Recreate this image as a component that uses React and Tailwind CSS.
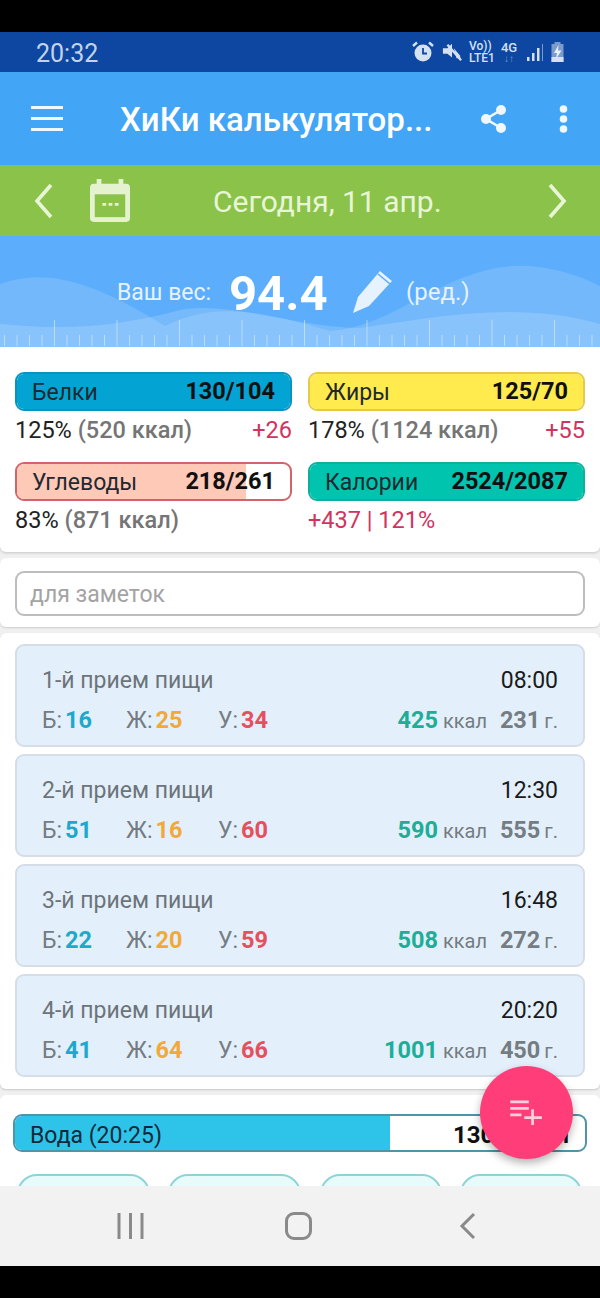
import React from 'react';

const meals = [
  { name: '1-й прием пищи', time: '08:00', b: 16, j: 25, u: 34, kcal: 425, g: 231 },
  { name: '2-й прием пищи', time: '12:30', b: 51, j: 16, u: 60, kcal: 590, g: 555 },
  { name: '3-й прием пищи', time: '16:48', b: 22, j: 20, u: 59, kcal: 508, g: 272 },
  { name: '4-й прием пищи', time: '20:20', b: 41, j: 64, u: 66, kcal: 1001, g: 450 },
];

const StatusBar = () => (
  <div className="h-10 bg-[#0d47a1] flex items-center pl-[36px] pr-[35px] justify-between">
    <span className="text-[25px] leading-none mt-[2px] text-[#c3d3ea]">20:32</span>
    <div className="flex items-center text-[#d5e0f0]">
      {/* alarm */}
      <svg width="22" height="24" viewBox="0 0 22 24" className="mr-[8px]">
        <circle cx="11" cy="13" r="8.500" fill="#d5e0f0" />
        <path d="M11 8v5.500h4" stroke="#0d47a1" strokeWidth="1.800" fill="none" />
        <path d="M1 6l4-3.500M21 6l-4-3.500" stroke="#d5e0f0" strokeWidth="2.400" />
      </svg>
      {/* muted */}
      <svg width="20" height="22" viewBox="0 0 22 22" className="mr-[7px]">
        <path d="M1 7h5l5-5v15l-5-4H1z" fill="#d5e0f0" />
        <path d="M6 3l15 17" stroke="#d5e0f0" strokeWidth="2.600" />
        <path d="M13 7l7 8v3h-4z" fill="#d5e0f0" />
      </svg>
      <div className="flex flex-col text-[12px] leading-[12px] font-medium w-[27px] mr-[5px]">
        <span>Vo))</span>
        <span>LTE1</span>
      </div>
      <div className="flex flex-col items-center w-[16px] text-[13px] leading-[13px] font-medium mr-[9px]">
        <span>4G</span>
        <span className="text-[10px] leading-[9px] text-[#7c9bcb]">↓↑</span>
      </div>
      <svg width="18" height="22" viewBox="0 0 18 22" className="mr-[6px]">
        <path d="M1 16h2.500v4H1zM6 12h2.500v8H6zM11 7h2.500v13H11z" fill="#d5e0f0" />
        <path d="M16 3h1v17h-1z" fill="#7c9bcb" />
      </svg>
      <svg width="15" height="22" viewBox="0 0 14 22">
        <path d="M4 1h6v2h3v18H1V3h3z" fill="#7c9bcb" />
        <path d="M1 16h12v5H1z" fill="#d5e0f0" />
        <path d="M8 4L3.500 12h3L5.500 18 11 9.500H7.500z" fill="#eaf0f8" />
      </svg>
    </div>
  </div>
);

const AppBar = () => (
  <div className="h-[93px] bg-[#42a5f5] flex items-center text-white">
    <svg width="32" height="25" viewBox="0 0 32 25" className="ml-[31px] shrink-0">
      <path d="M0 1.500h32M0 12.500h32M0 23.500h32" stroke="#f0f7fe" strokeWidth="3" />
    </svg>
    <span className="ml-[57px] mt-[2px] text-[33px] font-medium w-[330px] shrink-0 whitespace-nowrap">ХиКи калькулятор...</span>
    <svg width="27" height="30" viewBox="0 0 27 30" className="ml-[30px] shrink-0">
      <path d="M21 6L6 15l15 9" stroke="#f0f7fe" strokeWidth="2.600" fill="none" />
      <circle cx="21" cy="6" r="5" fill="#f0f7fe" />
      <circle cx="6" cy="15" r="5" fill="#f0f7fe" />
      <circle cx="21" cy="24" r="5" fill="#f0f7fe" />
    </svg>
    <svg width="9" height="28" viewBox="0 0 9 28" className="ml-[52px] shrink-0">
      <circle cx="4.500" cy="4" r="3.800" fill="#f0f7fe" />
      <circle cx="4.500" cy="14" r="3.800" fill="#f0f7fe" />
      <circle cx="4.500" cy="24" r="3.800" fill="#f0f7fe" />
    </svg>
  </div>
);

const DateBar = () => (
  <div className="h-[71px] bg-[#8bc34a] flex items-center text-[#e8f5d6]">
    <svg width="19" height="36" viewBox="0 0 19 36" className="ml-[34px] shrink-0">
      <path d="M17 2L3 18l14 16" stroke="#e8f5d6" strokeWidth="3.600" fill="none" />
    </svg>
    <svg width="40" height="45" viewBox="0 0 42 47" className="ml-[37px] shrink-0">
      <path d="M7 1h5v5h18V1h5v5h3a4 4 0 0 1 4 4v32a4 4 0 0 1-4 4H4a4 4 0 0 1-4-4V10a4 4 0 0 1 4-4h3z" fill="#e4f2d0" />
      <rect x="5" y="17" width="32" height="24" fill="#8bc34a" />
      <path d="M13 26h4v3h-4zM19.500 26h4v3h-4zM26 26h4v3h-4z" fill="#e4f2d0" />
    </svg>
    <span className="ml-[83px] mt-[2px] text-[30px] whitespace-nowrap w-[335px] shrink-0">Сегодня, 11 апр.</span>
    <svg width="19" height="36" viewBox="0 0 19 36" className="shrink-0">
      <path d="M2 2l14 16L2 34" stroke="#e8f5d6" strokeWidth="3.600" fill="none" />
    </svg>
  </div>
);

const Ruler = () => {
  const ticks = [];
  for (let i = 0; i < 48; i++) {
    const major = i % 5 === 4;
    ticks.push(
      <rect key={i} x={4 + i * 12.5} y={major ? 84 : 99} width="1" height={major ? 26 : 11} fill="#dcecfd" opacity=".6" />
    );
  }
  return <g>{ticks}</g>;
};

const WeightBar = () => (
  <div className="relative h-[111px] bg-[#5cadfb] overflow-hidden">
    <svg className="absolute inset-0" width="600" height="111" viewBox="0 0 600 111">
      <path d="M0 48C50 30 100 50 165 90C215 65 260 75 330 95C400 90 450 25 530 30C560 33 580 40 600 50V111H0z" fill="#ffffff" opacity=".14" />
      <path d="M0 88C70 95 120 90 180 74C230 65 290 90 360 92C440 80 520 65 600 88V111H0z" fill="#ffffff" opacity=".16" />
      <Ruler />
    </svg>
    <div className="relative flex items-center h-full pl-[117px] pt-[3px] text-[#e6f2fe]">
      <span className="text-[23px] mt-[1px] w-[112px] shrink-0">Ваш вес:</span>
      <span className="text-[49px] font-bold text-white leading-none w-[123px] shrink-0">94.4</span>
      <svg width="42" height="46" viewBox="0 0 42 46" className="mt-[-4px] shrink-0">
        <path d="M1 45l5-16L28 3l12 10-23 25z" fill="#e6f2fe" />
        <path d="M26 6l12 10M29.500 3l11 9" stroke="#5cadfb" strokeWidth="1.600" />
      </svg>
      <span className="text-[24px] ml-[12px] mt-[-3px]">(ред.)</span>
    </div>
  </div>
);

const Macro = ({ label, value, fill, border, width, lines }) => (
  <div className="w-[277px]">
    <div className={`relative h-[39px] rounded-[9px] border-2 bg-white overflow-hidden ${border}`}>
      <div className={`absolute inset-y-0 left-0 ${fill} ${width}`} />
      <div className="relative h-full pt-[1px] flex items-center justify-between pl-[15px] pr-[15px]">
        <span className="text-[23px] mt-[2px] text-[#1f2a30]">{label}</span>
        <span className="text-[23.500px] font-bold text-[#101010]">{value}</span>
      </div>
    </div>
    <div className="h-[40px] flex items-center justify-between text-[23.500px] leading-none">{lines}</div>
  </div>
);

const Kcal = ({ pct, kcal }) => (
  <span className="text-[#222]">{pct} <span className="font-medium text-[#757575]">({kcal} ккал)</span></span>
);

const Macros = () => (
  <div className="h-[205px] bg-white pl-[15px] pr-[15px] pt-[25px] grid grid-cols-[277px_277px] gap-x-[16px] gap-y-[11px] content-start rounded-b-[6px] shadow-[0_1px_3px_rgba(0,0,0,0.18)]">
    <Macro label="Белки" value="130/104" fill="bg-[#03a4d4]" border="border-[#0795bf]" width="w-full"
      lines={<><Kcal pct="125%" kcal="520" /><span className="text-[#d2335f]">+26</span></>} />
    <Macro label="Жиры" value="125/70" fill="bg-[#ffeb4d]" border="border-[#e4c94a]" width="w-full"
      lines={<><Kcal pct="178%" kcal="1124" /><span className="text-[#d2335f]">+55</span></>} />
    <Macro label="Углеводы" value="218/261" fill="bg-[#ffc9b8]" border="border-[#d2636b]" width="w-[84%]"
      lines={<Kcal pct="83%" kcal="871" />} />
    <Macro label="Калории" value="2524/2087" fill="bg-[#00c4ae]" border="border-[#0cb19e]" width="w-full"
      lines={<span className="text-[#d2335f]">+437 | 121%</span>} />
  </div>
);

const Notes = () => (
  <div className="mt-[6px] h-[69px] bg-white px-[15px] pt-[13px] rounded-[6px] shadow-[0_1px_2px_rgba(0,0,0,0.15)]">
    <div className="h-[45px] rounded-[9px] border-2 border-[#bdbdbd] flex items-center pl-[13px] pt-[4px] text-[23px] text-[#a3a3a3]">для заметок</div>
  </div>
);

const Macronutrient = ({ label, value, color, className }) => (
  <span className={`flex items-baseline text-[23px] ${className}`}>
    <span className="text-[#757c82] mr-[3px]">{label}</span>
    <span className={`text-[23.500px] font-bold ${color}`}>{value}</span>
  </span>
);

const MealCard = ({ meal }) => (
  <div className="h-[103px] rounded-[9px] bg-[#e3f0fb] border-2 border-[#d5dee6] pl-[25px] pr-[25px] pt-[19px]">
    <div className="flex justify-between items-center h-[32px]">
      <span className="text-[23px] text-[#6d7479]">{meal.name}</span>
      <span className="text-[23px] text-[#1a1a1a]">{meal.time}</span>
    </div>
    <div className="flex items-baseline mt-[6px] h-[32px]">
      <Macronutrient label="Б:" value={meal.b} color="text-[#1ea8cc]" className="w-[84px]" />
      <Macronutrient label="Ж:" value={meal.j} color="text-[#f2a93a]" className="w-[92px]" />
      <Macronutrient label="У:" value={meal.u} color="text-[#e5505f]" />
      <span className="ml-auto flex items-baseline">
        <span className="text-[23.500px] font-bold text-[#20ad98]">{meal.kcal}</span>
        <span className="text-[20px] text-[#757c82] ml-[5px] w-[57px]">ккал</span>
        <span className="text-[23.500px] font-bold text-[#757c82]">{meal.g}</span>
        <span className="text-[20px] text-[#757c82] ml-[4px]">г.</span>
      </span>
    </div>
  </div>
);

const Meals = () => (
  <div className="mt-[6px] h-[456px] bg-white px-[15px] pt-[11px] flex flex-col gap-[7px] rounded-[6px] shadow-[0_1px_2px_rgba(0,0,0,0.18)]">
    {meals.map(m => <MealCard key={m.name} meal={m} />)}
  </div>
);

const Water = () => (
  <div className="mt-[6px] h-[91px] bg-white px-[13px] pt-[19px] rounded-t-[6px] overflow-hidden">
    <div className="relative h-[38px] rounded-[9px] border-2 border-[#4e95a5] bg-white overflow-hidden">
      <div className="absolute inset-y-0 left-0 w-[375px] bg-[#2ec4ea]" />
      <div className="relative h-full pt-[3px] flex items-center justify-between pl-[15px] pr-[13px]">
        <span className="text-[23px] mt-[3px] text-[#0e2a38]">Вода (20:25)</span>
        <span className="text-[24px] font-bold text-[#101010]">1300/3021</span>
      </div>
    </div>
    <div className="mt-[22px] flex pl-[4px]">
      <div className="w-[133px] h-[40px] rounded-[24px] border-2 border-[#8fd3d6] bg-[#e8fbfb] mr-[18px]" />
      <div className="w-[133px] h-[40px] rounded-[24px] border-2 border-[#8fd3d6] bg-[#e8fbfb] mr-[19px]" />
      <div className="w-[122px] h-[40px] rounded-[24px] border-2 border-[#8fd3d6] bg-[#e8fbfb] mr-[18px]" />
      <div className="w-[122px] h-[40px] rounded-[24px] border-2 border-[#8fd3d6] bg-[#e8fbfb]" />
    </div>
  </div>
);

const Fab = () => (
  <div className="absolute left-[480px] top-[1066px] w-[93px] h-[93px] rounded-full bg-[#ff3d78] flex items-center justify-center shadow-[0_4px_8px_rgba(0,0,0,0.3)]">
    <svg width="34" height="26" viewBox="0 0 36 28">
      <path d="M0 2h20M0 9h20M0 16h12M24 10v17M15 19h19" stroke="#fbd0de" strokeWidth="3" fill="none" />
    </svg>
  </div>
);

const NavBar = () => (
  <div className="h-[80px] bg-[#f2f2f2] flex items-center">
    <svg width="28" height="26" viewBox="0 0 28 26" className="ml-[117px] shrink-0">
      <path d="M2 0v26M13.500 0v26M25 0v26" stroke="#8a8a8a" strokeWidth="3" />
    </svg>
    <div className="ml-[140px] w-[27px] h-[28px] rounded-[9px] border-[3px] border-[#8a8a8a]" />
    <svg width="18" height="28" viewBox="0 0 18 28" className="ml-[147px] shrink-0">
      <path d="M15 2L3 14l12 12" stroke="#8a8a8a" strokeWidth="3" fill="none" />
    </svg>
  </div>
);

export default function App() {
  return (
    <div className="relative w-[600px] h-[1298px] bg-black overflow-hidden font-['Roboto',sans-serif] flex flex-col">
      <div className="h-8 shrink-0 bg-black" />
      <StatusBar />
      <AppBar />
      <DateBar />
      <div className="h-[950px] shrink-0 bg-[#f0f0f0] overflow-hidden">
        <WeightBar />
        <Macros />
        <Notes />
        <Meals />
        <Water />
      </div>
      <NavBar />
      <Fab />
    </div>
  );
}
